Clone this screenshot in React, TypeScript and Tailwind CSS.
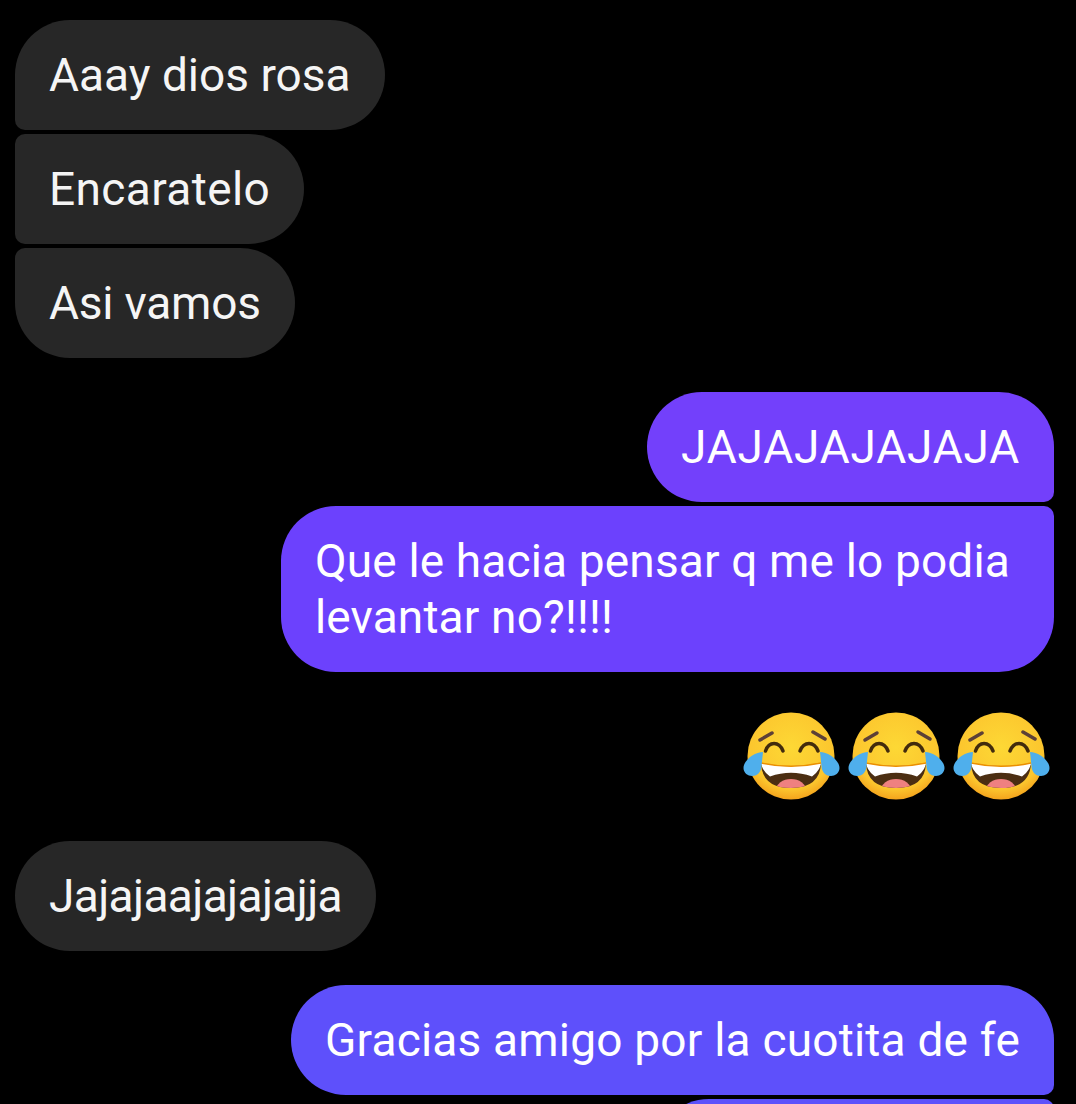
import { useId } from 'react';

function LaughEmoji() {
  const id = useId();
  return (
    <svg width="100" height="90" viewBox="12 12 100 90" className="shrink-0">
      <defs>
        <radialGradient id={`${id}face`} cx="0.5" cy="0.4" r="0.6">
          <stop offset="0" stopColor="#fdd835" />
          <stop offset="0.8" stopColor="#fcc62e" />
          <stop offset="1" stopColor="#f4a41d" />
        </radialGradient>
        <clipPath id={`${id}mouth`}>
          <path d="M31 63Q61 69.5 91 63Q90 88 61 88Q32 88 31 63Z" />
        </clipPath>
      </defs>
      <circle cx="61" cy="56" r="43.5" fill={`url(#${id}face)`} />
      <path d="M30 40L42 33M83 32L95 39" stroke="#5d4037" strokeWidth="3.5" strokeLinecap="round" fill="none" />
      <path d="M35.5 51C39 41 49 41 53 51M70 51C74 41 84 41 88 51" stroke="#422b0d" strokeWidth="3.5" strokeLinecap="round" fill="none" />
      <path d="M31 63Q61 69.5 91 63Q90 88 61 88Q32 88 31 63Z" fill="#4b2e12" />
      <g clipPath={`url(#${id}mouth)`}>
        <path d="M30 62H92L89 69Q86 74 82 76.5Q61 69 40 76.5Q36 74 33 69Z" fill="#fff" />
        <ellipse cx="61" cy="90" rx="15" ry="11" fill="#ef8080" />
      </g>
      <path d="M31 63Q61 69.5 91 63" stroke="#eb8f00" strokeWidth="1.5" fill="none" />
      <path d="M33 52C25 52 13.5 60 13.5 68C13.5 73 18 76 22 76C28 76 31.5 71 31.5 66Z" fill="#4fafec" />
      <path d="M90 52C98 52 109.5 60 109.5 68C109.5 73 105 76 101 76C95 76 91.5 71 91.5 66Z" fill="#4fafec" />
    </svg>
  );
}

export default function App() {
  return (
    <div className="h-[1104px] overflow-hidden bg-black pt-5 pl-[15px] pr-[22px] font-['Roboto',sans-serif] text-[46px] leading-[56px] text-[#f5f5f5]">
      <div className="flex flex-col items-start gap-1">
        <div className="rounded-[55px] rounded-bl-[10px] bg-[#272727] px-[34px] py-[27px]">Aaay dios rosa</div>
        <div className="rounded-r-[55px] rounded-l-[10px] bg-[#272727] px-[34px] py-[27px] tracking-[0.4px]">Encaratelo</div>
        <div className="rounded-[55px] rounded-tl-[10px] bg-[#272727] px-[34px] py-[27px] tracking-[-0.2px]">Asi vamos</div>
      </div>

      <div className="mt-[34px] flex flex-col items-end gap-1 text-white">
        <div className="rounded-[55px] rounded-br-[10px] bg-[#7340fb] px-[34px] py-[27px] tracking-[0.8px]">JAJAJAJAJAJA</div>
        <div className="max-w-[773px] rounded-l-[55px] rounded-r-[55px] rounded-tr-[10px] bg-[#6c41fd] px-[34px] py-[27px] tracking-[0.15px]">
          Que le hacia pensar q me lo podia levantar no?!!!!
        </div>
      </div>

      <div className="mt-10 mr-[2px] flex justify-end gap-[5px]">
        <LaughEmoji />
        <LaughEmoji />
        <LaughEmoji />
      </div>

      <div className="mt-[39px] flex">
        <div className="rounded-[55px] bg-[#272727] px-[34px] py-[27px] tracking-[-0.6px]">Jajajaajajajajja</div>
      </div>

      <div className="mt-[34px] flex flex-col items-end gap-1 text-white">
        <div className="rounded-[55px] rounded-br-[10px] bg-[#5e50fb] px-[34px] py-[27px] tracking-[0.2px]">Gracias amigo por la cuotita de fe</div>
        <div className="h-[110px] w-[400px] rounded-l-[55px] rounded-tr-[10px] bg-[#5c52fb]" />
      </div>
    </div>
  );
}
